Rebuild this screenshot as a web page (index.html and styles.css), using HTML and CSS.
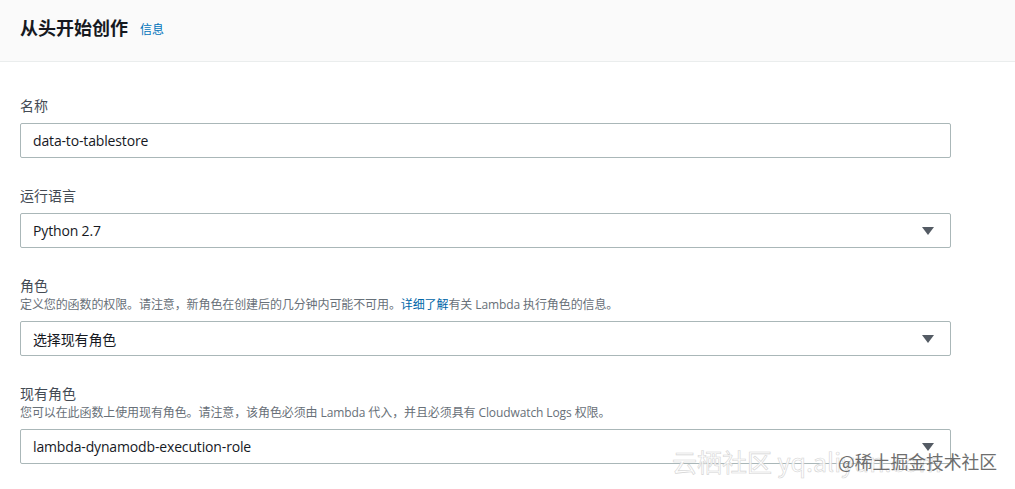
FILE: index.html
```html
<!DOCTYPE html>
<html lang="zh-CN">
<head>
<meta charset="utf-8">
<link rel="stylesheet" href="styles.css">
</head>
<body>
<div class="page">
  <header class="panel-header">
    <h2 class="panel-title">从头开始创作</h2>
    <a class="info-link">信息</a>
  </header>
  <div class="form">
    <div class="field">
      <div class="label">名称</div>
      <div class="control"><span class="value">data-to-tablestore</span></div>
    </div>
    <div class="field">
      <div class="label">运行语言</div>
      <div class="control select"><span class="value">Python 2.7</span><span class="caret"></span></div>
    </div>
    <div class="field">
      <div class="label">角色</div>
      <div class="desc">定义您的函数的权限。请注意，新角色在创建后的几分钟内可能不可用。<a class="link">详细了解</a>有关 Lambda 执行角色的信息。</div>
      <div class="control select"><span class="value">选择现有角色</span><span class="caret"></span></div>
    </div>
    <div class="field">
      <div class="label">现有角色</div>
      <div class="desc">您可以在此函数上使用现有角色。请注意，该角色必须由 Lambda 代入，并且必须具有 Cloudwatch Logs 权限。</div>
      <div class="control select"><span class="value">lambda-dynamodb-execution-role</span><span class="caret"></span></div>
    </div>
  </div>
  <div class="watermark">
    <span class="wm-ghost">云栖社区 yq.aliyun.com</span>
    <span class="wm-text">@稀土掘金技术社区</span>
  </div>
</div>
</body>
</html>
```
FILE: styles.css
```css
* { box-sizing: border-box; }
html, body { margin: 0; padding: 0; background: #ffffff; }
body {
  font-family: "Open Sans", "Noto Sans CJK SC", sans-serif;
  color: #16191f;
  width: 1015px;
  height: 489px;
  overflow: hidden;
}
.page { position: relative; width: 1015px; height: 489px; }
.panel-header {
  height: 62px;
  background: #fafafa;
  border-bottom: 1px solid #eaeded;
  display: flex;
  align-items: center;
  padding: 0 20px 7px;
  gap: 12px;
}
.panel-title {
  margin: 0;
  font-size: 18px;
  font-weight: 700;
  color: #16191f;
  font-family: "Noto Sans CJK SC", sans-serif;
  line-height: 24px;
}
.info-link {
  font-size: 12px;
  color: #0073bb;
  font-family: "Noto Sans CJK SC", sans-serif;
  padding-top: 3px;
}
.form {
  width: 951px;
  padding: 33px 0 0 20px;
  display: flex;
  flex-direction: column;
  gap: 27px;
}
.field { display: flex; flex-direction: column; }
.label {
  font-size: 14px;
  line-height: 20px;
  color: #444b54;
  font-family: "Noto Sans CJK SC", sans-serif;
  margin-bottom: 8px;
}
.desc {
  font-size: 12px;
  line-height: 16px;
  color: #687078;
  margin-top: -6px;
  margin-bottom: 8px;
  font-family: "Open Sans", "Noto Sans CJK SC", sans-serif;
  letter-spacing: -0.1px;
}
.link { color: #0066a8; }
.control {
  height: 35px;
  border: 1px solid #aab7b8;
  border-radius: 2px;
  display: flex;
  align-items: center;
  padding: 0 12px;
  background: #fff;
}
.value {
  font-size: 14px;
  color: #16191f;
  font-family: "Open Sans", "Noto Sans CJK SC", sans-serif;
  letter-spacing: -0.15px;
}
.select { justify-content: space-between; padding-right: 16px; }
.caret {
  width: 0;
  height: 0;
  border-left: 6px solid transparent;
  border-right: 6px solid transparent;
  border-top: 8px solid #545b64;
}
.watermark {
  position: absolute;
  left: 672px;
  top: 443px;
  display: flex;
  align-items: center;
  white-space: nowrap;
}
.wm-ghost {
  position: absolute;
  left: 0;
  top: 0;
  font-size: 25px;
  font-family: "Noto Sans CJK SC", sans-serif;
  color: rgba(255,255,255,0.9);
  -webkit-text-stroke: 0.6px #d4d4d4;
  line-height: 36px;
}
.wm-text {
  position: absolute;
  left: 166px;
  top: 6px;
  font-size: 17.8px;
  line-height: 24px;
  color: #6e6e6e;
  font-family: "Noto Sans CJK SC", sans-serif;
}
```
